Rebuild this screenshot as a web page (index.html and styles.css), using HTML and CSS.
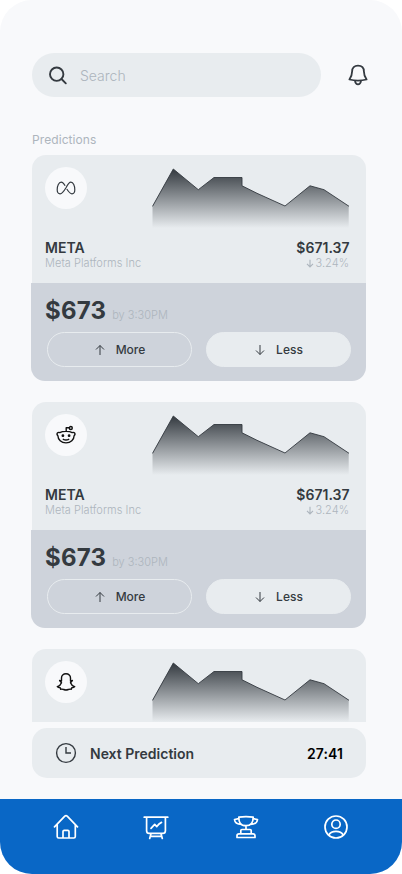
FILE: index.html
```
<!DOCTYPE html>
<html lang="en">
<head>
<meta charset="utf-8">
<meta name="viewport" content="width=device-width, initial-scale=1">
<title>Predictions</title>
<link rel="stylesheet" href="styles.css">
</head>
<body>
<svg class="defs" aria-hidden="true">
  <defs>
    <linearGradient id="fade" x1="0" y1="0" x2="0" y2="1">
      <stop offset="0" stop-color="#343a40"/>
      <stop offset="1" stop-color="#343a40" stop-opacity="0"/>
    </linearGradient>
    <symbol id="chart" viewBox="0 0 198 62">
      <path fill="url(#fade)" d="M.5 39 21.3 2 46.3 22.7 62 10.5H90V18.8L105 26.3 133 39 158 18.8 172 22.7 196.7 39V61H.5Z"/>
      <path fill="none" stroke="#343a40" stroke-opacity=".9" d="M.5 39.4 21.3 2 46.3 22.7 62 10.5H90V18.8L105 26.3 133 39 158 18.8 172 22.7 197 39.3"/>
    </symbol>
    <symbol id="up" viewBox="0 0 10 12"><path d="M5 11V1.5M1 5.5 5 1.5 9 5.5"/></symbol>
    <symbol id="down" viewBox="0 0 10 12"><path d="M5 1V10.5M1 6.5 5 10.5 9 6.5"/></symbol>
  </defs>
</svg>
<div class="screen">
  <header class="header">
    <div class="search">
      <svg class="search-icon" viewBox="0 0 20 20"><circle cx="8.700" cy="8.200" r="6.700"/><path d="m13.500 13 4.300 4.300"/></svg>
      <span>Search</span>
    </div>
    <svg class="bell" viewBox="0 0 20 22"><path d="M4.100 7.500C4.100 3.800 6.400 1.700 10 1.700S15.900 3.800 15.900 7.500C15.900 11 16.700 12.800 18.600 15.500 13 16.900 7 16.900 1.400 15.500 3.300 12.800 4.100 11 4.100 7.500Z"/><path d="M7 16.700C7.300 19.200 8.300 20.400 10 20.400S12.700 19.200 13 16.700"/></svg>
  </header>
  <h1 class="title">Predictions</h1>
  <main class="list">
    <article class="card">
      <div class="stock">
        <div class="visual">
          <div class="logo"><svg class="meta" viewBox="0 0 20 14"><path d="M9.100 4.800C7.800 2.500 6.700 1.200 5.200 1.200 2.800 1.200 1.200 5 1.200 8.700 1.200 11.400 2.200 12.800 4.100 12.800 6.300 12.800 7.600 10.700 10 6.700 11.700 3.500 13 1.200 14.900 1.200 17.300 1.200 18.800 5 18.800 8.700 18.800 11.400 17.800 12.800 16 12.800 13.900 12.800 12.700 11 10.800 8"/></svg></div>
          <svg class="chart"><use href="#chart"/></svg>
        </div>
        <div class="row main-row"><span>META</span><span>$671.37</span></div>
        <div class="row sub-row"><span>Meta Platforms Inc</span><span class="change"><svg class="tiny"><use href="#down"/></svg>3.24%</span></div>
      </div>
      <div class="bet">
        <div class="goal"><strong>$673</strong><span>by 3:30PM</span></div>
        <div class="actions">
          <button class="more"><svg class="arrow"><use href="#up"/></svg>More</button>
          <button class="less"><svg class="arrow"><use href="#down"/></svg>Less</button>
        </div>
      </div>
    </article>
    <article class="card">
      <div class="stock">
        <div class="visual">
          <div class="logo"><svg class="brand" viewBox="0 0 20 20"><path d="M3.800 7.600C6.500 6 13.500 6 16.200 7.600 18.400 6.700 20 9 18.100 10.800 18 14.800 14.800 17.900 10 17.900S2 14.800 1.900 10.800C0 9 1.600 6.700 3.800 7.600ZM10.200 6.300V2.700H13.500"/><circle cx="14.800" cy="3" r="1.500"/><path d="M7.300 14.300C8.800 15.100 11.200 15.100 12.700 14.300"/><circle class="dot" cx="6.900" cy="10.700" r=".7"/><circle class="dot" cx="13.100" cy="10.700" r=".7"/></svg></div>
          <svg class="chart"><use href="#chart"/></svg>
        </div>
        <div class="row main-row"><span>META</span><span>$671.37</span></div>
        <div class="row sub-row"><span>Meta Platforms Inc</span><span class="change"><svg class="tiny"><use href="#down"/></svg>3.24%</span></div>
      </div>
      <div class="bet">
        <div class="goal"><strong>$673</strong><span>by 3:30PM</span></div>
        <div class="actions">
          <button class="more"><svg class="arrow"><use href="#up"/></svg>More</button>
          <button class="less"><svg class="arrow"><use href="#down"/></svg>Less</button>
        </div>
      </div>
    </article>
    <article class="card">
      <div class="stock">
        <div class="visual">
          <div class="logo"><svg class="brand" viewBox="0 0 20 20"><path d="M10 1.800C7.300 1.800 5.500 3.500 5.500 6V9L3.600 8.500 5.500 10.700C5 12.200 3.500 13.800 1.300 14.600 1.900 15.500 3.300 15.700 4.200 15.700L4.700 17.300C6.800 16.500 7.800 18 10 18S13.200 16.500 15.300 17.300L15.800 15.700C16.700 15.700 18.100 15.500 18.700 14.600 16.500 13.800 15 12.200 14.500 10.700L16.400 8.500 14.500 9V6C14.500 3.500 12.700 1.800 10 1.800Z"/></svg></div>
          <svg class="chart"><use href="#chart"/></svg>
        </div>
      </div>
    </article>
  </main>
  <section class="next">
    <svg class="clock" viewBox="0 0 22 22"><circle cx="11" cy="11" r="9.400"/><path d="M11 5V11H16"/></svg>
    <span class="next-label">Next Prediction</span>
    <span class="time">27:41</span>
  </section>
  <nav class="nav">
    <svg viewBox="0 0 26 26"><path d="M1.500 12.800 11.800 2.200Q13 1.100 14.200 2.200L24.500 12.800M4.200 10.500V22.500Q4.200 24 5.700 24H20.800Q22.300 24 22.300 22.500V10.500M10 23.500V17.500Q10 16.300 11.200 16.300H14.800Q16 16.300 16 17.500V23.500"/></svg>
    <svg viewBox="0 0 26 26"><path d="M1.200 3.200H24.800M3.600 3.500V16.700Q3.600 19.400 6.300 19.400H19.700Q22.400 19.400 22.400 16.700V3.500M8 19.700 6.700 24.500M18 19.700 19.300 24.500M7.300 22.400H18.700M8 14.300 11.700 10.400 13.800 12.600C15 10.900 16.500 9.300 18.500 8.400"/></svg>
    <svg viewBox="0 0 26 26"><path d="M5.800 3.200C10.500 2.500 15.500 2.500 20.200 3.200 20.200 8.500 18.500 11.700 13 11.700S5.800 8.500 5.800 3.200ZM5.800 4.700 1.500 5.500C1.800 9 4.500 10.300 8.500 10.500M20.200 4.700 24.500 5.500C24.200 9 21.500 10.300 17.500 10.500M13 12V15.300M7.800 19.500V16.600Q7.800 15.500 9 15.500H17Q18.200 15.500 18.200 16.600V19.500M4 23.500V21.700Q4 19.800 6 19.800H20Q22 19.800 22 21.700V23.500Z"/></svg>
    <svg viewBox="0 0 26 26"><circle cx="13" cy="13" r="11"/><circle cx="13" cy="10.200" r="4.200"/><path d="M5.800 21C8.500 16.200 17.500 16.200 20.200 21"/></svg>
  </nav>
</div>
</body>
</html>
```
FILE: styles.css
```
* { box-sizing: border-box; }
body { margin: 0; background: #fff; font-family: Inter, "Liberation Sans", sans-serif; color: #343a40; }
svg { display: block; flex: none; }
.defs { position: absolute; width: 0; height: 0; }
.screen { width: 402px; height: 874px; display: flex; flex-direction: column; background: #f8f9fb; border-radius: 32px; overflow: hidden; }
.header { display: flex; align-items: center; padding: 53px 34px 0 32px; justify-content: space-between; }
.search { width: 289px; height: 44px; border-radius: 22px; background: #e8ecef; display: flex; align-items: center; gap: 12px; padding-left: 16px; padding-top: 1px; font-size: 14px; font-weight: 350; color: #adb5bd; }
.search-icon { width: 20px; height: 20px; fill: none; stroke: #343a40; stroke-width: 1.9; stroke-linecap: round; }
.bell { width: 20px; height: 22px; fill: none; stroke: #343a40; stroke-width: 1.8; stroke-linejoin: round; }
.title { margin: 35px 0 0 32px; font-size: 12px; line-height: 16px; font-weight: 400; letter-spacing: .08px; color: #adb5bd; }
.list { margin-top: 7px; height: 567px; overflow: hidden; padding: 0 36px 0 31px; display: flex; flex-direction: column; gap: 21px; }
.card { flex: none; }
.stock { margin-left: 1px; height: 128px; padding: 12px 16px 0 13px; border-radius: 14px 14px 0 0; background: #e8ecef; }
.visual { display: flex; justify-content: space-between; height: 72px; }
.logo { width: 42px; height: 42px; border-radius: 50%; background: #f8f9fb; display: flex; align-items: center; justify-content: center; }
.meta { width: 20px; height: 14px; fill: none; stroke: #343a40; stroke-width: 1.2; }
.brand { width: 20px; height: 20px; fill: none; stroke: #111; stroke-width: 1.4; stroke-linejoin: round; stroke-linecap: round; }
.dot { fill: #111; }
.chart { width: 198px; height: 62px; }
.row { display: flex; justify-content: space-between; padding-right: .5px; }
.main-row { font-size: 14px; line-height: 18px; font-weight: 600; }
.sub-row { font-size: 11px; line-height: 13px; font-weight: 350; letter-spacing: .05px; color: #adb5bd; padding-right: 1px; }
.change { display: flex; align-items: center; gap: 1px; }
.tiny { width: 8px; height: 9px; fill: none; stroke: #adb5bd; stroke-width: 1.5; }
.bet { height: 98px; border-radius: 0 0 14px 14px; background: #ced3db; padding: 13px 15px 0 14px; }
.goal { display: flex; align-items: baseline; gap: 6px; height: 36px; line-height: 30px; }
.goal strong { font-size: 24px; font-weight: 700; letter-spacing: .2px; }
.goal span { font-size: 11px; font-weight: 350; color: #adb5bd; }
.actions { display: flex; gap: 14px; padding-left: 2px; }
button { width: 145px; height: 35px; margin: 0; padding: 0 0 0 1px; border: 1px solid #e8ecef; border-radius: 18px; font: 500 12px Inter, sans-serif; color: #343a40; display: flex; align-items: center; justify-content: center; gap: 11px; }
.more { background: transparent; }
.less { background: #e8ecef; }
.arrow { width: 10px; height: 12px; fill: none; stroke: #343a40; stroke-width: 1; }
.next { margin: 6px 36px 0 32px; height: 50px; border-radius: 15px; background: #e8ecef; display: flex; align-items: center; padding: 1px 23px 0 23px; font-size: 14px; font-weight: 600; }
.clock { width: 22px; height: 22px; margin-top: -1px; fill: none; stroke: #343a40; stroke-width: 1.4; }
.next-label { margin-left: 13px; }
.time { margin-left: auto; color: #000; letter-spacing: .1px; }
.nav { margin-top: 21px; height: 75px; background: #0967c6; display: flex; justify-content: space-between; padding: 15px 53px 0; }
.nav svg { width: 26px; height: 26px; fill: none; stroke: #fff; stroke-width: 1.7; stroke-linecap: round; stroke-linejoin: round; }
```
